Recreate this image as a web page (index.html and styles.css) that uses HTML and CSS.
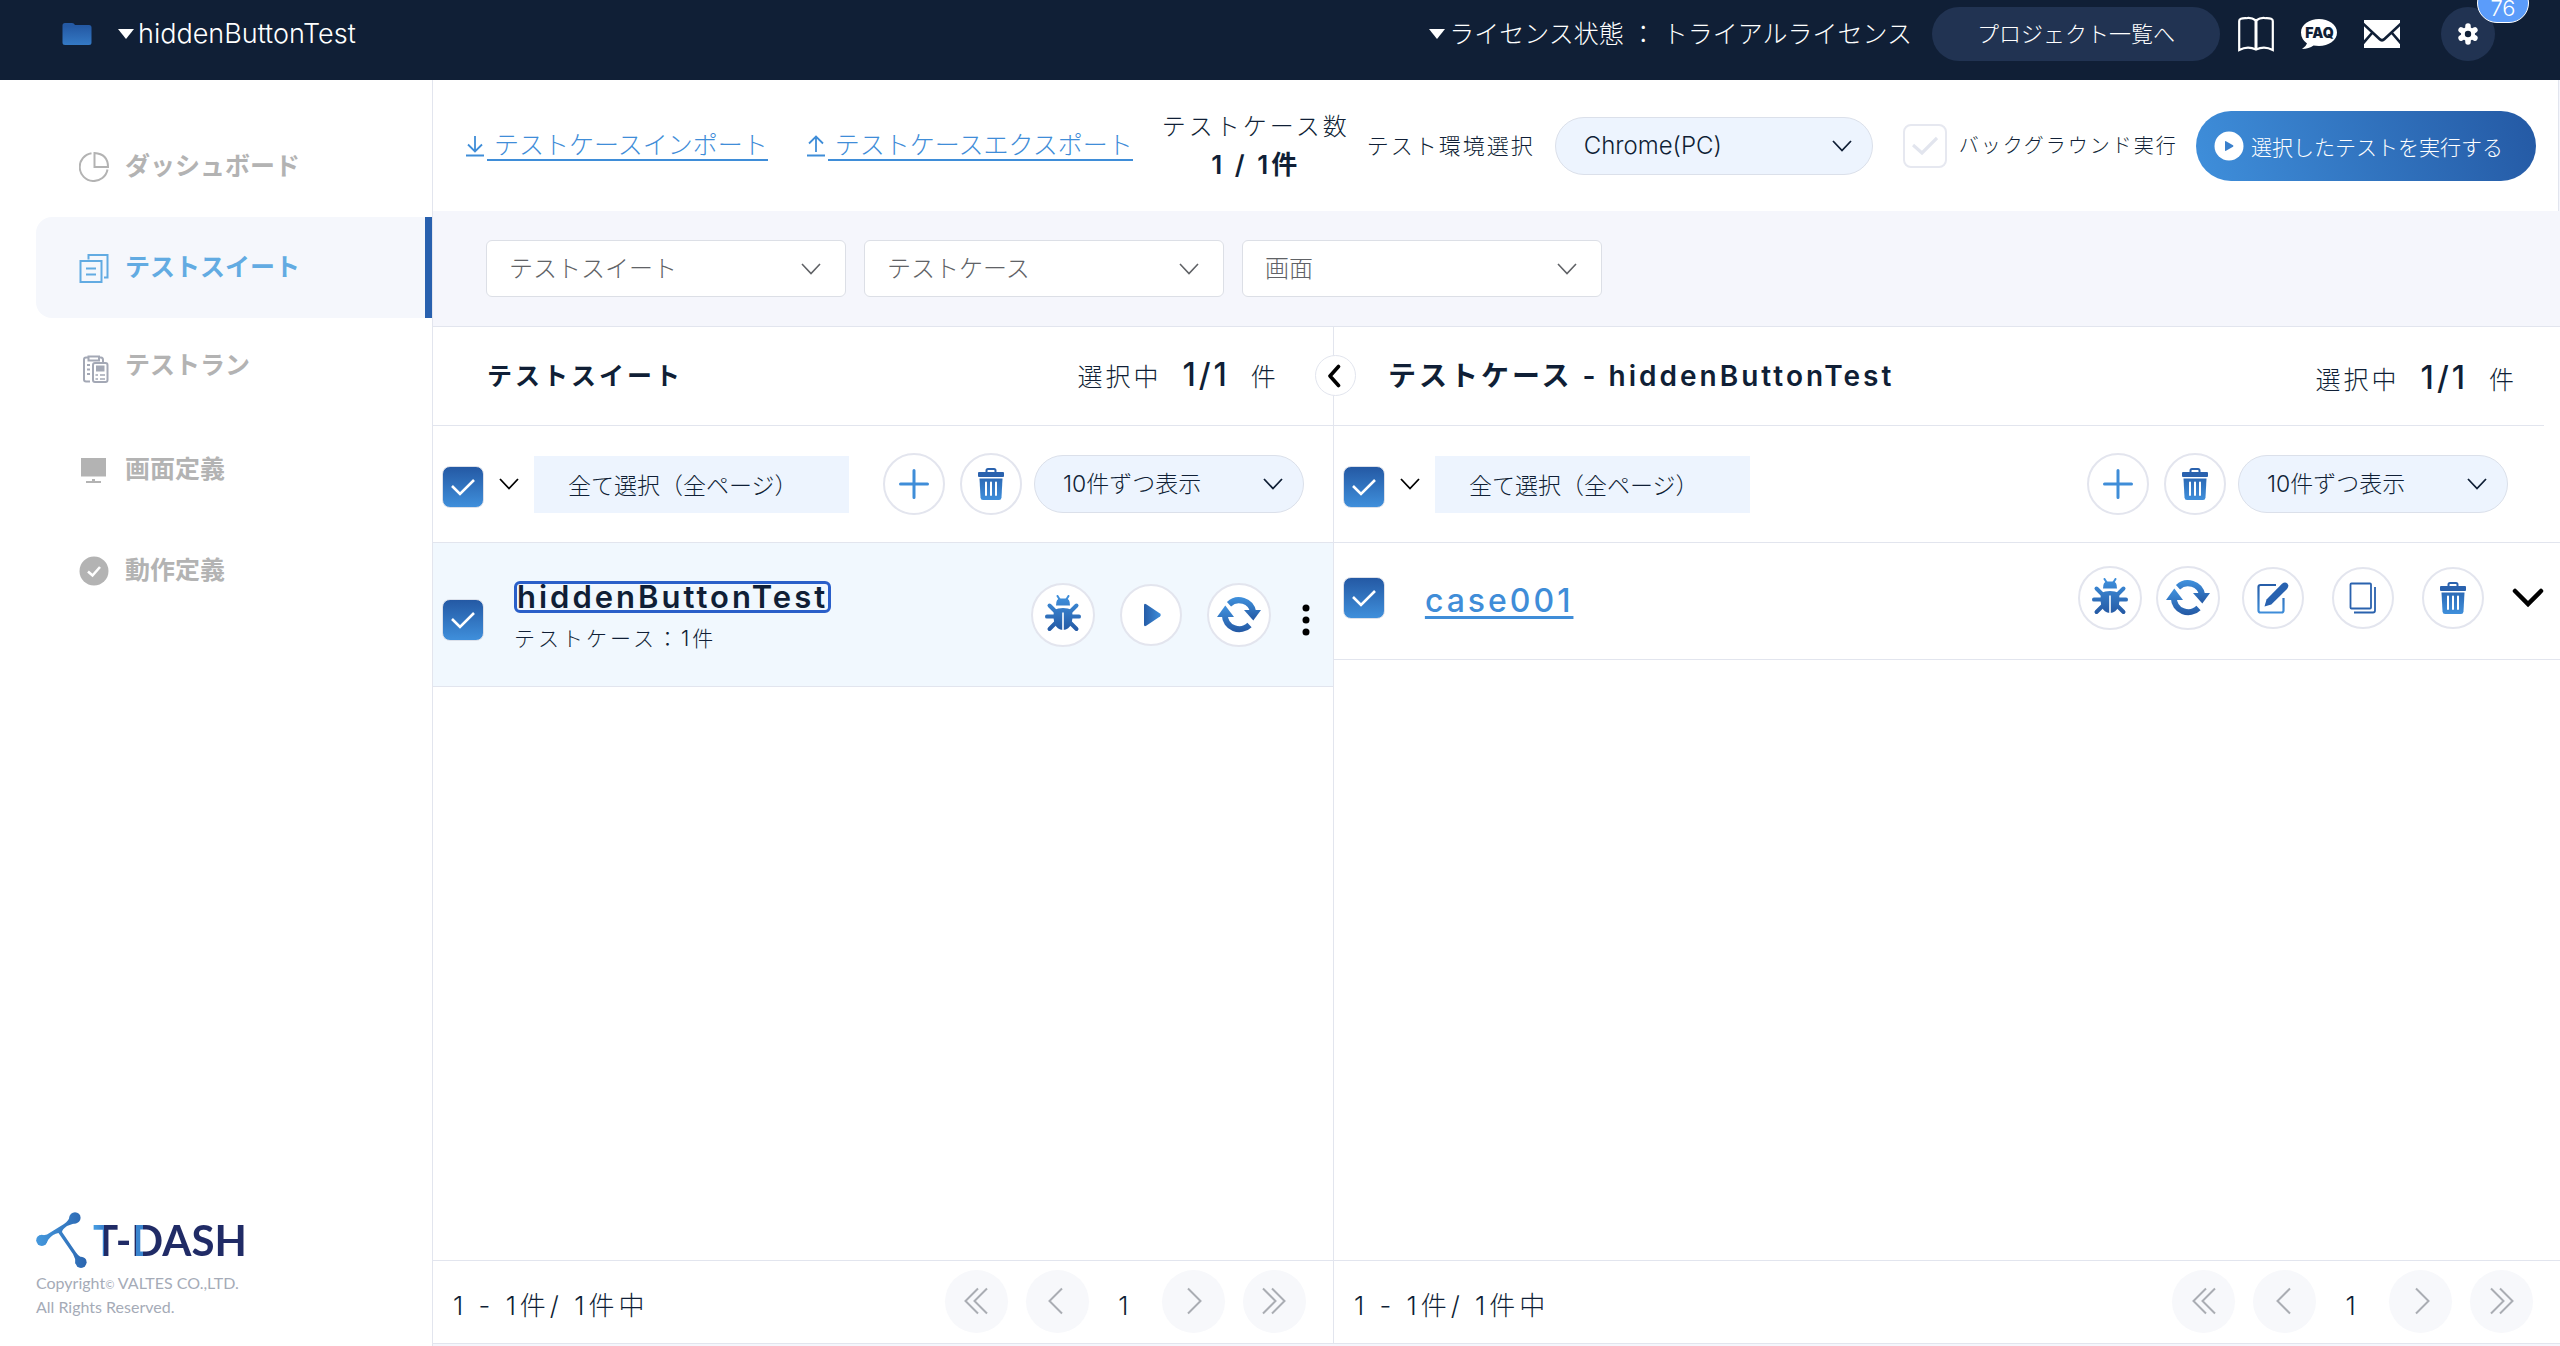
FILE: index.html
```html
<!DOCTYPE html>
<html lang="ja">
<head>
    <meta charset="UTF-8">
    <meta name="viewport" content="width=device-width, initial-scale=1.0">
    <title>T-DASH</title>
    <link rel="stylesheet" href="styles.css">
</head>
<body>
    <!-- Icon sprite -->
    <svg class="sprite" aria-hidden="true">
        <defs>
            <linearGradient id="grad-down" gradientUnits="userSpaceOnUse" x1="0" y1="4" x2="0" y2="36">
                <stop offset="0" stop-color="#2459a4"/><stop offset="1" stop-color="#3f8fdb"/>
            </linearGradient>
            <linearGradient id="grad-up" gradientUnits="userSpaceOnUse" x1="0" y1="2" x2="0" y2="36">
                <stop offset="0" stop-color="#3f8fdb"/><stop offset="1" stop-color="#2459a4"/>
            </linearGradient>
            <linearGradient id="grad-top" gradientUnits="userSpaceOnUse" x1="0" y1="5" x2="0" y2="27">
                <stop offset="0" stop-color="#3f8fdb"/><stop offset="1" stop-color="#2459a4"/>
            </linearGradient>
            <linearGradient id="grad-bottom" gradientUnits="userSpaceOnUse" x1="0" y1="14" x2="0" y2="39">
                <stop offset="0" stop-color="#3f8fdb"/><stop offset="1" stop-color="#2459a4"/>
            </linearGradient>
            <linearGradient id="grad-side" gradientUnits="userSpaceOnUse" x1="12" y1="0" x2="30" y2="0">
                <stop offset="0" stop-color="#2459a4"/><stop offset="1" stop-color="#3f8fdb"/>
            </linearGradient>
            <linearGradient id="grad-logo" gradientUnits="userSpaceOnUse" x1="0" y1="28" x2="50" y2="28">
                <stop offset="0" stop-color="#4599de"/><stop offset="1" stop-color="#2b66b0"/>
            </linearGradient>
        </defs>
        <symbol id="icon-plus" viewBox="0 0 40 40">
            <path d="M20 6.500V33.500M6.500 20H33.500" fill="none" stroke="#3f8dd8" stroke-width="3" stroke-linecap="round"/>
        </symbol>
        <symbol id="icon-trash" viewBox="0 0 40 40">
            <path d="M15.500 9V6.500Q15.500 5 17 5H23Q24.500 5 24.500 6.500V9" fill="none" stroke="#2a62ae" stroke-width="2"/>
            <rect x="7" y="8" width="26" height="5" rx="1" fill="#2a62ae"/>
            <path d="M8.500 14.500H31.500L30.500 33.500Q30.300 36 28 36H12Q9.700 36 9.500 33.500Z" fill="url(#grad-down)"/>
            <path d="M15 18.500V31M20 18.500V31M25 18.500V31" stroke="#fff" stroke-width="2" stroke-linecap="round"/>
        </symbol>
        <symbol id="icon-bug" viewBox="0 0 40 40">
            <g fill="none" stroke="url(#grad-up)" stroke-linecap="round">
                <path d="M14.500 1L17 5M25.500 1L23 5" stroke-width="2"/>
                <path d="M6.500 10.500L13 17M33.500 10.500L27 17M4 21.600L12 21.500M36 21.600L28 21.500M6.500 34L13 27.500M33.500 34L27 27.500" stroke-width="4"/>
            </g>
            <path d="M13 10.500Q13 3.500 17 3.500H23Q27 3.500 27 10.500Z" fill="url(#grad-up)"/>
            <path d="M11 15Q15 13 20 13T29 15Q30.500 22 28.500 29Q26 34.500 20 35Q14 34.500 11.500 29Q9.500 22 11 15Z" fill="url(#grad-up)"/>
            <path d="M20 17.500V35" stroke="#fff" stroke-width="1.600"/>
        </symbol>
        <symbol id="icon-refresh" viewBox="0 0 44 44">
            <path d="M12 11.200A14.500 14.500 0 0 1 36.200 19" fill="none" stroke="url(#grad-top)" stroke-width="6"/>
            <path d="M27 17H44L36.300 27.500Z" fill="url(#grad-top)"/>
            <path d="M7.800 22A14.500 14.500 0 0 0 32.500 32" fill="none" stroke="url(#grad-bottom)" stroke-width="6"/>
            <path d="M0 24L8.300 12.500L17 24Z" fill="url(#grad-bottom)"/>
        </symbol>
        <symbol id="icon-play" viewBox="0 0 40 40">
            <path d="M13 10.500Q13 8 15.200 9.300L29 18.500Q30.800 20 29 21.500L15.200 30.700Q13 32 13 29.500Z" fill="url(#grad-side)"/>
        </symbol>
        <symbol id="icon-edit" viewBox="0 0 40 40">
            <path d="M23 7H7.500Q5.500 7 5.500 9V32.500Q5.500 34.500 7.500 34.500H28.500Q30.500 34.500 30.500 32.500V20" fill="none" stroke="url(#grad-down)" stroke-width="2.200"/>
            <path d="M11.500 28.500L13.500 21.500L29 5.800Q32 3.200 34.300 5.500T34 11L18.300 26.500Z" fill="#2862b0"/>
        </symbol>
        <symbol id="icon-copy" viewBox="0 0 40 40">
            <rect x="7.500" y="5.500" width="20.500" height="25" rx="1" fill="none" stroke="#2a62ae" stroke-width="1.800"/>
            <path d="M32 9V32.500Q32 34.500 30 34.500H11" fill="none" stroke="#2a62ae" stroke-width="1.800"/>
        </symbol>
        <symbol id="icon-chev-left" viewBox="0 0 24 28">
            <path d="M17 1.500L4.500 14L17 26.500" fill="none" stroke="currentColor" stroke-width="2"/>
        </symbol>
        <symbol id="icon-chev-left2" viewBox="0 0 24 28">
            <path d="M14 1.500L1.500 14L14 26.500M23 1.500L10.500 14L23 26.500" fill="none" stroke="currentColor" stroke-width="2"/>
        </symbol>
        <symbol id="icon-chev-right" viewBox="0 0 24 28">
            <path d="M7 1.500L19.500 14L7 26.500" fill="none" stroke="currentColor" stroke-width="2"/>
        </symbol>
        <symbol id="icon-chev-right2" viewBox="0 0 24 28">
            <path d="M1 1.500L13.500 14L1 26.500M10 1.500L22.500 14L10 26.500" fill="none" stroke="currentColor" stroke-width="2"/>
        </symbol>
        <symbol id="icon-down" viewBox="0 0 20 12">
            <path d="M1 1L10 10.500L19 1" fill="none" stroke="currentColor" stroke-width="1.800"/>
        </symbol>
    </svg>

    <header class="header">
        <svg class="folder" viewBox="0 0 30 24"><path d="M3 1H10Q12 1 13 3H27Q29.500 3 29.500 5.500V20.500Q29.500 23 27 23H3Q.5 23 .5 20.500V3.500Q.5 1 3 1Z" fill="url(#grad-down)"/></svg>
        <button class="header-menu project"><span class="caret"></span>hiddenButtonTest</button>
        <button class="header-menu license"><span class="caret"></span>ライセンス状態 ： トライアルライセンス</button>
        <a href="#" class="project-list">プロジェクト一覧へ</a>
        <nav class="header-icons">
            <a href="#" aria-label="マニュアル">
                <svg width="36" height="36" viewBox="0 0 36 36" fill="none" stroke="#fff" stroke-width="2.200"><path d="M18 4.500Q13 1 8 2.200Q1.200 2 1.200 5V34Q9.500 29.500 18 33.500Q26.500 29.500 34.800 34V5Q34.800 2 28 2.200Q23 1 18 4.500Z"/><path d="M18 4V33.500" stroke-width="3"/></svg>
            </a>
            <a href="#" aria-label="よくある質問">
                <svg width="36" height="32" viewBox="0 0 36 32"><path d="M18 1C27.500 1 36 6.500 36 14.500S27.500 28 18 28Q15 28 12.500 27.600Q8 31 1 31Q5 28.500 6 25.500Q0 21 0 14.500C0 6.500 8.500 1 18 1Z" fill="#fff"/><text class="faq-text" x="18.500" y="19.500" text-anchor="middle">FAQ</text></svg>
            </a>
            <a href="#" aria-label="お問い合わせ">
                <svg width="36" height="28" viewBox="0 0 36 28"><path d="M0 0H36V28H0Z" fill="#fff"/><path d="M-1 3.500L15.500 19Q18 21.500 20.500 19L37 3.500M-1 23.500L8 13M37 23.500L28 13" fill="none" stroke="#101f36" stroke-width="2.600"/></svg>
            </a>
            <button class="settings" aria-label="設定">
                <svg width="22" height="22" viewBox="0 0 22 22"><path d="M11 3V19M4.100 7L17.900 15M4.100 15L17.900 7" stroke="#fff" stroke-width="5.500" stroke-linecap="round"/><circle cx="11" cy="11" r="7" fill="#fff"/><circle cx="11" cy="11" r="3.200" fill="#101f36"/></svg>
                <span class="badge">76</span>
            </button>
        </nav>
    </header>

    <div class="layout">
        <aside class="sidebar">
            <nav class="menu">
                <a href="#" class="menu-item">
                    <svg width="30" height="30" viewBox="0 0 30 30" fill="none" stroke="currentColor" stroke-width="2"><path d="M12.500 1.200A14 14 0 1 0 28.500 17.500"/><path d="M15.500 1V15H29Q29 2 15.500 1Z"/></svg>
                    <span>ダッシュボード</span>
                </a>
                <a href="#" class="menu-item active">
                    <svg width="30" height="30" viewBox="0 0 30 30" fill="none" stroke="currentColor" stroke-width="2"><rect x="1.500" y="8" width="21" height="21"/><path d="M9.500 6.500V2H28.500V24.500H25M7 15.500H17M7 21.500H17"/></svg>
                    <span>テストスイート</span>
                </a>
                <a href="#" class="menu-item menu-run">
                    <svg width="30" height="30" viewBox="0 0 30 30" fill="none" stroke="#a3a8b5" stroke-width="2"><path d="M11 27.500H7Q5 27.500 5 25.500V5.500Q5 3.500 7 3.500H9.500M20 3.500H22Q24 3.500 24 6V8M9.500 2.500H20V6.500H9.500ZM8 11H11M8 15.500H11M8 20H11"/><rect x="14" y="9" width="14.500" height="19" rx="2"/><path d="M17 11.500H25.500V17.500H17Z" fill="#a3a8b5" stroke="none"/><path d="M16.500 21H19M21 21H26M16.500 25H19M21 25H26" stroke-width="1.600"/></svg>
                    <span>テストラン</span>
                </a>
                <a href="#" class="menu-item">
                    <svg width="30" height="30" viewBox="0 0 30 30" fill="currentColor"><path d="M2 3H27V21.500H2ZM13 24H16V26H22V28H7V26H13Z"/></svg>
                    <span>画面定義</span>
                </a>
                <a href="#" class="menu-item">
                    <svg width="30" height="30" viewBox="0 0 30 30"><circle cx="15" cy="15" r="14.500" fill="currentColor"/><path d="M9 15.500L13.500 19.500L21 11" fill="none" stroke="#fff" stroke-width="2.600"/></svg>
                    <span>動作定義</span>
                </a>
            </nav>
            <div class="brand">
                <a href="#" class="logo">
                    <svg width="52" height="56" viewBox="0 0 52 56" fill="url(#grad-logo)"><circle cx="39" cy="5.800" r="5.600"/><circle cx="5.800" cy="28.300" r="5.600"/><circle cx="45" cy="50.300" r="5.600"/><path d="M34 3.500Q33 9 28 12L11 22.500Q6 24 3 23.500L8.500 33Q11 31 12 28Q17 21.500 22.500 21L37 42Q39.500 46 39.500 52L50 47.500Q43 45 40 40.500L26 20Q26 17.500 31 14Q37 11.500 41 11Z"/></svg>
                    <span class="logo-text">T-DASH</span>
                </a>
                <p class="copyright">Copyright<small>©</small> VALTES CO.,LTD.<br>All Rights Reserved.</p>
            </div>
        </aside>

        <main class="main">
            <section class="toolbar">
                <a href="#" class="transfer">
                    <svg width="20" height="22" viewBox="0 0 20 22" fill="none" stroke="currentColor" stroke-width="1.800"><path d="M10 1V16M3 9.500L10 16.500L17 9.500M1 20.500H19"/></svg>
                    <span>&nbsp;テストケースインポート</span>
                </a>
                <a href="#" class="transfer">
                    <svg width="20" height="22" viewBox="0 0 20 22" fill="none" stroke="currentColor" stroke-width="1.800"><path d="M10 17V2M3 8.500L10 1.500L17 8.500M1 20.500H19"/></svg>
                    <span>&nbsp;テストケースエクスポート</span>
                </a>
                <div class="case-count">テストケース数<strong>1 / 1件</strong></div>
                <label class="env-label" for="env">テスト環境選択</label>
                <select id="env" class="pill-select env-select"><option>Chrome(PC)</option></select>
                <input type="checkbox" id="background" class="check check-off">
                <label class="background-label" for="background">バックグラウンド実行</label>
                <button class="run-button">
                    <svg width="30" height="30" viewBox="0 0 30 30"><circle cx="15" cy="15" r="14.500" fill="#fff"/><path d="M11 10.800Q11 9.600 12 10.200L19 14.300Q20 15 19 15.700L12 19.800Q11 20.400 11 19.200Z" fill="#3a80cc"/></svg>
                    選択したテストを実行する
                </button>
            </section>

            <section class="filters">
                <select class="filter" aria-label="テストスイート"><option>テストスイート</option></select>
                <select class="filter" aria-label="テストケース"><option>テストケース</option></select>
                <select class="filter" aria-label="画面"><option>画面</option></select>
            </section>

            <div class="panels">
                <section class="panel suites">
                    <div class="panel-header">
                        <h2>テストスイート</h2>
                        <p class="selected">選択中<strong>1/1</strong>件</p>
                    </div>
                    <div class="panel-tools">
                        <input type="checkbox" class="check" aria-label="すべて選択" checked>
                        <button class="expand" aria-label="開く"><svg width="20" height="12"><use href="#icon-down"/></svg></button>
                        <button class="select-all">全て選択（全ページ）</button>
                        <button class="circle push" aria-label="追加"><svg width="40" height="40"><use href="#icon-plus"/></svg></button>
                        <button class="circle" aria-label="削除"><svg width="40" height="40"><use href="#icon-trash"/></svg></button>
                        <select class="pill-select page-size" aria-label="表示件数"><option>10件ずつ表示</option></select>
                    </div>
                    <div class="row suite-row">
                        <input type="checkbox" class="check" aria-label="hiddenButtonTest" checked>
                        <div class="suite-info">
                            <button class="suite-name">hiddenButtonTest</button>
                            <p>テストケース：1件</p>
                        </div>
                        <div class="suite-actions">
                            <button class="circle large" aria-label="デバッグ"><svg width="40" height="40"><use href="#icon-bug"/></svg></button>
                            <button class="circle" aria-label="実行"><svg width="40" height="40"><use href="#icon-play"/></svg></button>
                            <button class="circle large" aria-label="更新"><svg width="44" height="44"><use href="#icon-refresh"/></svg></button>
                            <button class="more" aria-label="メニュー"><svg width="8" height="32" viewBox="0 0 8 32"><circle cx="4" cy="4" r="3.500"/><circle cx="4" cy="16" r="3.500"/><circle cx="4" cy="28" r="3.500"/></svg></button>
                        </div>
                    </div>
                    <div class="panel-footer">
                        <p>1 - 1件/ 1件中</p>
                        <nav class="pager">
                            <button aria-label="最初"><svg width="24" height="28"><use href="#icon-chev-left2"/></svg></button>
                            <button aria-label="前へ"><svg width="24" height="28"><use href="#icon-chev-left"/></svg></button>
                            <span>1</span>
                            <button aria-label="次へ"><svg width="24" height="28"><use href="#icon-chev-right"/></svg></button>
                            <button aria-label="最後"><svg width="24" height="28"><use href="#icon-chev-right2"/></svg></button>
                        </nav>
                    </div>
                </section>

                <section class="panel cases">
                    <button class="collapse" aria-label="閉じる"><svg width="16" height="24" viewBox="0 0 16 24"><path d="M11.500 2.500L3 12L11.500 21.500" fill="none" stroke="#000" stroke-width="3.600" stroke-linecap="round" stroke-linejoin="round"/></svg></button>
                    <div class="panel-header">
                        <h2>テストケース - hiddenButtonTest</h2>
                        <p class="selected">選択中<strong>1/1</strong>件</p>
                    </div>
                    <div class="panel-tools">
                        <input type="checkbox" class="check" aria-label="すべて選択" checked>
                        <button class="expand" aria-label="開く"><svg width="20" height="12"><use href="#icon-down"/></svg></button>
                        <button class="select-all">全て選択（全ページ）</button>
                        <button class="circle push" aria-label="追加"><svg width="40" height="40"><use href="#icon-plus"/></svg></button>
                        <button class="circle" aria-label="削除"><svg width="40" height="40"><use href="#icon-trash"/></svg></button>
                        <select class="pill-select page-size" aria-label="表示件数"><option>10件ずつ表示</option></select>
                    </div>
                    <div class="row case-row">
                        <input type="checkbox" class="check" aria-label="case001" checked>
                        <a href="#" class="case-name">case001</a>
                        <div class="case-run">
                            <button class="circle large" aria-label="デバッグ"><svg width="40" height="40"><use href="#icon-bug"/></svg></button>
                            <button class="circle large" aria-label="更新"><svg width="44" height="44"><use href="#icon-refresh"/></svg></button>
                        </div>
                        <div class="case-actions">
                            <button class="circle" aria-label="編集"><svg width="40" height="40"><use href="#icon-edit"/></svg></button>
                            <button class="circle" aria-label="コピー"><svg width="40" height="40"><use href="#icon-copy"/></svg></button>
                            <button class="circle" aria-label="削除"><svg width="40" height="40"><use href="#icon-trash"/></svg></button>
                            <button aria-label="開く"><svg width="32" height="20" viewBox="0 0 32 20"><path d="M3 3L16 16L29 3" fill="none" stroke="#000" stroke-width="4.500" stroke-linecap="round"/></svg></button>
                        </div>
                    </div>
                    <div class="panel-footer">
                        <p>1 - 1件/ 1件中</p>
                        <nav class="pager">
                            <button aria-label="最初"><svg width="24" height="28"><use href="#icon-chev-left2"/></svg></button>
                            <button aria-label="前へ"><svg width="24" height="28"><use href="#icon-chev-left"/></svg></button>
                            <span>1</span>
                            <button aria-label="次へ"><svg width="24" height="28"><use href="#icon-chev-right"/></svg></button>
                            <button aria-label="最後"><svg width="24" height="28"><use href="#icon-chev-right2"/></svg></button>
                        </nav>
                    </div>
                </section>
            </div>
        </main>
    </div>
</body>
</html>
```
FILE: styles.css
```css
* {
    box-sizing: border-box;
}
body {
    display: flex;
    flex-direction: column;
    min-height: 100vh;
    margin: 0;
    font-family: Inter, "Noto Sans CJK JP", sans-serif;
    font-size: 25px;
    font-weight: 300;
    line-height: 36px;
    color: #101f36;
    background-color: #fff;
}
button, select, input {
    margin: 0;
    font-family: inherit;
    font-weight: inherit;
    color: inherit;
}
button {
    padding: 0;
    border: none;
    background: none;
    cursor: pointer;
}
h2, p {
    margin: 0;
}
svg {
    display: block;
    flex: none;
}
.sprite {
    position: absolute;
    width: 0;
    height: 0;
}

/* Header */
.header {
    display: flex;
    align-items: center;
    height: 80px;
    padding: 0 65px 12px 62px;
    background-color: #101f36;
    color: #fff;
    white-space: nowrap;
}
.folder {
    width: 30px;
    height: 24px;
}
.header-menu {
    display: flex;
    align-items: center;
    gap: 4px;
    font-size: 25px;
    line-height: 36px;
}
.project {
    margin-left: 26px;
    font-size: 27px;
}
.license {
    margin-left: auto;
}
.caret {
    border: 8px solid transparent;
    border-top: 10px solid #fff;
    border-bottom: none;
}
.project-list {
    width: 288px;
    margin-left: 20px;
    border-radius: 27px;
    background-color: #213352;
    color: #fff;
    font-size: 22px;
    line-height: 54px;
    text-align: center;
    text-decoration: none;
}
.header-icons {
    display: flex;
    align-items: center;
    gap: 27px;
    margin-left: 18px;
}
.faq-text {
    font-size: 14px;
    font-weight: 900;
    fill: #101f36;
}
.settings {
    position: relative;
    display: flex;
    align-items: center;
    justify-content: center;
    width: 54px;
    height: 54px;
    margin-left: 14px;
    border-radius: 50%;
    background-color: #213352;
}
.badge {
    position: absolute;
    top: -24px;
    left: 36px;
    width: 52px;
    height: 40px;
    padding-top: 5px;
    border: 1px solid #fff;
    border-radius: 20px;
    background-color: #5b9cfa;
    color: #fff;
    font-size: 22px;
    line-height: 38px;
    text-align: center;
}

/* Sidebar */
.layout {
    display: flex;
    flex: 1;
}
.sidebar {
    display: flex;
    flex-direction: column;
    justify-content: space-between;
    width: 432px;
    padding: 36px 0 28px 36px;
}
.menu-item {
    display: flex;
    align-items: center;
    gap: 16px;
    height: 101px;
    padding-left: 43px;
    color: #b3b3b3;
    font-weight: bold;
    text-decoration: none;
}
.menu-item span {
    padding-bottom: 2px;
}
.menu-item.active {
    border-right: 7px solid #2860ae;
    border-radius: 16px 0 0 16px;
    background-color: #f5f7fc;
    color: #62abe2;
}
.menu-item.menu-run span {
    padding-bottom: 8px;
}
.logo {
    display: flex;
    align-items: center;
    gap: 5px;
    text-decoration: none;
}
.logo-text {
    font-family: Lato, sans-serif;
    font-size: 42px;
    font-weight: bold;
    line-height: 56px;
    color: transparent;
    background: linear-gradient(to right, #4599de 3px, #3a80cc 11px, #202b66 11px, #202b66 43px, #3a85cf 43px, #3a85cf 50px, #202b66 50px);
    -webkit-background-clip: text;
    background-clip: text;
}
.copyright {
    margin-top: 4px;
    font-family: Lato, sans-serif;
    font-size: 16px;
    font-weight: normal;
    line-height: 22px;
    color: #a5abb7;
}
.copyright small {
    font-size: 11px;
}

/* Toolbar */
.main {
    display: flex;
    flex: 1;
    flex-direction: column;
    min-width: 0;
    padding-bottom: 2px;
    border-left: 1px solid #e2e5ee;
    background-color: #f5f6fc;
}
.toolbar {
    display: flex;
    align-items: center;
    height: 131px;
    margin-right: 1px;
    padding: 0 22px 0 32px;
    border-right: 1px solid #e2e5ee;
    background-color: #fff;
    white-space: nowrap;
}
.transfer {
    display: flex;
    align-items: center;
    gap: 2px;
    margin-right: 38px;
    color: #3f8dd8;
    text-decoration: none;
}
.transfer + .transfer {
    margin-right: 29px;
}
.transfer span {
    border-bottom: 2px solid #3f8dd8;
    line-height: 28px;
}
.case-count {
    margin-right: 17px;
    font-size: 24px;
    line-height: 38px;
    letter-spacing: 3px;
    text-align: center;
}
.case-count strong {
    display: block;
    font-size: 26px;
    font-weight: 600;
}
.env-label {
    margin-right: 20px;
    font-size: 22px;
    letter-spacing: 2px;
}
.pill-select {
    height: 58px;
    padding: 0 28px;
    border: 1px solid #dbe0ea;
    border-radius: 29px;
    appearance: none;
    background: #edf4fe url("data:image/svg+xml,%3Csvg xmlns='http://www.w3.org/2000/svg' width='20' height='12'%3E%3Cpath d='M1 1L10 10.500L19 1' fill='none' stroke='%23101f36' stroke-width='1.800'/%3E%3C/svg%3E") no-repeat right 20px center;
    font-size: 23px;
}
.env-select {
    width: 318px;
    font-size: 24px;
}
.check {
    flex: none;
    width: 42px;
    height: 42px;
    border: 1px solid #dbe0ea;
    border-radius: 8px;
    appearance: none;
    background: url("data:image/svg+xml,%3Csvg xmlns='http://www.w3.org/2000/svg' width='26' height='20'%3E%3Cpath d='M2 9L10 17L24 3' fill='none' stroke='white' stroke-width='2.600'/%3E%3C/svg%3E") no-repeat center, linear-gradient(#2459a4, #3f8fdb);
}
.check-off {
    width: 44px;
    height: 44px;
    margin-left: 30px;
    border: 2px solid #e6e8f0;
    background: url("data:image/svg+xml,%3Csvg xmlns='http://www.w3.org/2000/svg' width='26' height='20'%3E%3Cpath d='M1 9L10 17L25 2' fill='none' stroke='%23e2e5ee' stroke-width='3.200'/%3E%3C/svg%3E") no-repeat center;
}
.background-label {
    margin-left: 12px;
    font-size: 20px;
    letter-spacing: 2px;
}
.run-button {
    display: flex;
    align-items: center;
    gap: 7px;
    width: 340px;
    height: 70px;
    margin-left: auto;
    padding-left: 18px;
    border-radius: 35px;
    background: linear-gradient(70deg, #3f8fdb, #2459a4);
    color: #fff;
    font-size: 21px;
}

/* Filters */
.filters {
    display: flex;
    gap: 18px;
    padding: 29px 53px;
    border-bottom: 1px solid #e2e5ee;
}
.filter {
    width: 360px;
    height: 57px;
    padding: 0 22px;
    border: 1px solid #dcdfe6;
    border-radius: 6px;
    appearance: none;
    background: #fff url("data:image/svg+xml,%3Csvg xmlns='http://www.w3.org/2000/svg' width='20' height='12'%3E%3Cpath d='M1 1L10 10.500L19 1' fill='none' stroke='%23606266' stroke-width='1.600'/%3E%3C/svg%3E") no-repeat right 24px center;
    color: #606266;
    font-size: 24px;
}

/* Panels */
.panels {
    display: grid;
    flex: 1;
    grid-template-columns: 11fr 15fr;
    background-color: #fff;
}
.panel {
    position: relative;
    display: flex;
    flex-direction: column;
    white-space: nowrap;
}
.cases {
    border-left: 1px solid #e2e5ee;
}
.collapse {
    position: absolute;
    top: 28px;
    left: -19px;
    display: flex;
    align-items: center;
    justify-content: center;
    width: 41px;
    height: 41px;
    border: 1px solid #e2e5ee;
    border-radius: 50%;
    background-color: #fff;
}
.panel-header {
    display: flex;
    align-items: center;
    justify-content: space-between;
    height: 99px;
    padding: 0 54px;
    border-bottom: 1px solid #e2e5ee;
    letter-spacing: 3px;
}
.panel-header h2 {
    font-size: 25px;
    font-weight: 600;
}
.cases .panel-header {
    margin-right: 16px;
    padding-right: 27px;
}
.cases .panel-header h2 {
    font-size: 28px;
}
.selected {
    font-size: 25px;
}
.cases .selected {
    padding-top: 6px;
}
.selected strong {
    margin: 0 21px;
    font-size: 32px;
    font-weight: 500;
}
.panel-tools {
    display: flex;
    align-items: center;
    height: 117px;
    padding: 0 29px 0 9px;
    border-bottom: 1px solid #e2e5ee;
}
.cases .panel-tools {
    padding-right: 52px;
}
.panel-tools .check {
    margin-top: 6px;
}
.expand {
    margin: 0 15px;
    color: #000;
}
.select-all {
    width: 315px;
    height: 57px;
    padding-left: 34px;
    background-color: #edf4fe;
    font-size: 23px;
    text-align: left;
}
.circle {
    display: flex;
    align-items: center;
    justify-content: center;
    flex: none;
    width: 62px;
    height: 62px;
    border: 2px solid #e3e5ee;
    border-radius: 50%;
    background-color: #fff;
}
.circle.large {
    width: 64px;
    height: 64px;
}
.push {
    margin-left: auto;
    margin-right: 15px;
}
.page-size {
    width: 270px;
    margin-left: 12px;
}
.row {
    display: flex;
    align-items: center;
    border-bottom: 1px solid #e2e5ee;
}
.suite-row {
    height: 144px;
    padding: 0 23px 0 9px;
    background-color: #f1f8fe;
}
.suite-row .check, .more {
    margin-top: 10px;
}
.suite-info {
    flex: 1;
    margin-left: 30px;
    padding-top: 8px;
    font-size: 21px;
    letter-spacing: 3px;
}
.suite-name {
    margin-bottom: 8px;
    border: 3px solid #2a5fc9;
    border-radius: 6px;
    font-size: 31px;
    font-weight: 600;
    line-height: 26px;
    letter-spacing: 3px;
}
.suite-actions, .case-actions {
    display: flex;
    align-items: center;
    gap: 25px;
}
.more {
    margin-left: 6px;
}
.case-row {
    height: 117px;
    padding: 0 16px 6px 9px;
}
.case-name {
    flex: 1;
    margin-left: 40px;
    padding-top: 6px;
    color: #3f8dd8;
    font-size: 32px;
    font-weight: 500;
    letter-spacing: 3px;
    text-underline-offset: 4px;
}
.case-run {
    display: flex;
    gap: 14px;
    margin-right: 22px;
}
.case-actions {
    gap: 28px;
}
.panel-footer {
    display: flex;
    align-items: center;
    justify-content: space-between;
    height: 84px;
    margin-top: auto;
    padding: 0 27px 2px 20px;
    border-top: 1px solid #e2e5ee;
    border-bottom: 1px solid #e2e5ee;
    font-size: 26px;
    letter-spacing: 4px;
}
.panel-footer p, .pager span {
    padding-top: 10px;
}
.pager {
    display: flex;
    align-items: center;
    gap: 18px;
}
.pager button {
    display: flex;
    align-items: center;
    justify-content: center;
    width: 63px;
    height: 63px;
    border-radius: 50%;
    background-color: #f7f8fb;
    color: #aaadb3;
}
.pager span {
    width: 37px;
    text-align: center;
}
```
